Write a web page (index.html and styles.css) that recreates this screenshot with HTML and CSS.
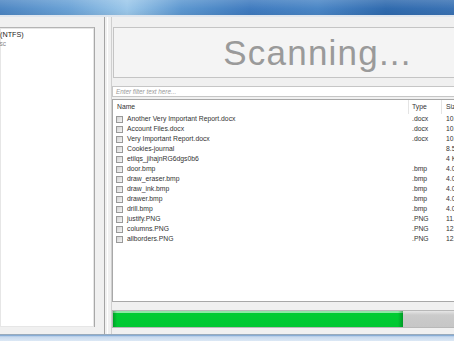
FILE: index.html
```html
<!DOCTYPE html>
<html>
<head>
<meta charset="utf-8">
<link rel="stylesheet" href="styles.css">
</head>
<body>
<div class="window">
  <div class="titlebar"></div>
  <div class="main">
    <div class="left">
      <div class="tree">
        <div class="tree-item">Local Disk (C:) (NTFS)</div>
        <div class="tree-sub">Local Disc</div>
      </div>
    </div>
    <div class="splitter"></div>
    <div class="right">
      <div class="status">Scanning...</div>
      <div class="filter">Enter filter text here...</div>
      <div class="table">
        <div class="row head">
          <div class="c-name">Name</div>
          <div class="c-type">Type</div>
          <div class="c-size">Size</div>
        </div>
        <div class="row"><div class="c-name"><span class="cb"></span>Another Very Important Report.docx</div><div class="c-type">.docx</div><div class="c-size">10.3 KB</div></div>
        <div class="row"><div class="c-name"><span class="cb"></span>Account Files.docx</div><div class="c-type">.docx</div><div class="c-size">10.1 KB</div></div>
        <div class="row"><div class="c-name"><span class="cb"></span>Very Important Report.docx</div><div class="c-type">.docx</div><div class="c-size">10.2 KB</div></div>
        <div class="row"><div class="c-name"><span class="cb"></span>Cookies-journal</div><div class="c-type"></div><div class="c-size">8.5 KB</div></div>
        <div class="row"><div class="c-name"><span class="cb"></span>etilqs_jihajnRG6dgs0b6</div><div class="c-type"></div><div class="c-size">4 KB</div></div>
        <div class="row"><div class="c-name"><span class="cb"></span>door.bmp</div><div class="c-type">.bmp</div><div class="c-size">4.05 KB</div></div>
        <div class="row"><div class="c-name"><span class="cb"></span>draw_eraser.bmp</div><div class="c-type">.bmp</div><div class="c-size">4.05 KB</div></div>
        <div class="row"><div class="c-name"><span class="cb"></span>draw_ink.bmp</div><div class="c-type">.bmp</div><div class="c-size">4.05 KB</div></div>
        <div class="row"><div class="c-name"><span class="cb"></span>drawer.bmp</div><div class="c-type">.bmp</div><div class="c-size">4.05 KB</div></div>
        <div class="row"><div class="c-name"><span class="cb"></span>drill.bmp</div><div class="c-type">.bmp</div><div class="c-size">4.05 KB</div></div>
        <div class="row"><div class="c-name"><span class="cb"></span>justify.PNG</div><div class="c-type">.PNG</div><div class="c-size">11.2 KB</div></div>
        <div class="row"><div class="c-name"><span class="cb"></span>columns.PNG</div><div class="c-type">.PNG</div><div class="c-size">12.1 KB</div></div>
        <div class="row"><div class="c-name"><span class="cb"></span>allborders.PNG</div><div class="c-type">.PNG</div><div class="c-size">12.4 KB</div></div>
      </div>
      <div class="progress"><div class="fill" style="width:290px"></div></div>
    </div>
  </div>
  <div class="taskbar"></div>
</div>
</body>
</html>
```

FILE: styles.css
```css
html, body {
  margin: 0;
  padding: 0;
}
body {
  width: 454px;
  height: 341px;
  overflow: hidden;
  background: #f0f0f0;
  font-family: "Liberation Sans", Arial, sans-serif;
  font-size: 6.8px;
  color: #333;
}
.window {
  display: flex;
  flex-direction: column;
  width: 454px;
  height: 341px;
}
.titlebar {
  height: 15px;
  flex: none;
  background:
    linear-gradient(180deg, rgba(255,255,255,0.15) 0%, rgba(255,255,255,0) 60%, rgba(0,0,0,0.05) 100%),
    linear-gradient(90deg, #4d86c3 0%, #6aa2d6 15%, #9cc8ea 28%, #5c97d0 40%, #3f7bbf 55%, #4a86c6 70%, #2f6aae 85%, #3a72b4 100%);
  border-bottom: 2px solid #dfe6ee;
}
.main {
  flex: 1;
  display: flex;
  padding-top: 10px;
  min-height: 0;
}
.left {
  width: 104px;
  flex: none;
}
.tree {
  width: 95px;
  height: 300px;
  background: #fff;
  border-top: 1px solid #b4b4b4;
  border-right: 1px solid #a8a8a8;
  box-shadow: inset 0 0 0 1px #e6e6e6;
  padding-top: 2px;
  box-sizing: border-box;
  overflow: hidden;
}
.tree-item {
  margin-left: -49px;
  font-size: 7.2px;
  color: #222;
  line-height: 9px;
  white-space: nowrap;
}
.tree-sub {
  margin-left: -24px;
  font-size: 6.5px;
  color: #888;
  line-height: 10px;
  white-space: nowrap;
}
.splitter {
  width: 2px;
  flex: none;
  margin-top: -10px;
  border-left: 1px solid #a4a4a4;
  border-right: 1px solid #ffffff;
}
.right {
  flex: none;
  width: 410px;
  margin-left: 3px;
  border-left: 1px solid #cfcfcf;
  margin-top: -10px;
  padding-top: 10px;
}
.status {
  margin-left: 1px;
  height: 51px;
  box-sizing: border-box;
  border: 1px solid #c4c4c4;
  background: #f4f4f4;
  display: flex;
  align-items: center;
  justify-content: center;
  font-size: 35px;
  letter-spacing: 1.2px;
  color: #9a9a9a;
}
.filter {
  margin-top: 8px;
  height: 11px;
  box-sizing: border-box;
  border: 1px solid #c6c6c6;
  background: #fff;
  font-style: italic;
  color: #9a9a9a;
  font-size: 6.3px;
  line-height: 9px;
  padding-left: 3px;
}
.table {
  margin-top: 2px;
  height: 203px;
  box-sizing: border-box;
  border: 1px solid #a8a8a8;
  background: #fff;
  overflow: hidden;
}
.row {
  display: grid;
  grid-template-columns: 296px 33px 1fr;
  height: 10px;
  line-height: 10px;
  white-space: nowrap;
}
.row.head {
  height: 14px;
  line-height: 14px;
  background: #fff;
}
.row.head > div {
  border-right: 1px solid #e4e4e4;
}
.c-name {
  display: flex;
  align-items: center;
  padding-left: 3px;
  overflow: hidden;
}
.row.head .c-name {
  padding-left: 4px;
}
.c-type {
  padding-left: 3px;
}
.c-size {
  padding-left: 4px;
}
.cb {
  width: 7px;
  height: 7px;
  flex: none;
  box-sizing: border-box;
  border: 1px solid #9a9a9a;
  background: linear-gradient(135deg, #d4d4d4, #f4f4f4);
  margin-right: 4px;
}
.progress {
  margin-top: 8px;
  margin-left: 0;
  height: 18px;
  box-sizing: border-box;
  border: 1px solid #b8b8b8;
  background: linear-gradient(180deg, #e6e6e6 0%, #cbcbcb 25%, #c6c6c6 100%);
}
.fill {
  height: 100%;
  background:
    linear-gradient(90deg, rgba(0,80,20,0.35) 0px, rgba(0,0,0,0) 4px, rgba(0,0,0,0) calc(100% - 5px), rgba(0,80,20,0.4) 100%),
    linear-gradient(180deg, #8ee8a6 0%, #8ee8a6 10%, #00cc33 14%, #00c832 100%);
}
.taskbar {
  height: 6px;
  flex: none;
  background: linear-gradient(180deg, #6f9ccc 0%, #c7d9ee 30%, #dce8f5 100%);
  border-top: 1px solid #9ab;
}
```
